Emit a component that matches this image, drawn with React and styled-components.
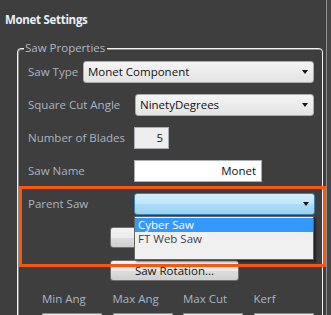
import React from 'react';
import styled, { createGlobalStyle } from 'styled-components';

const GlobalStyle = createGlobalStyle`
  html, body {
    margin: 0;
    padding: 0;
    background: #464646;
    overflow: hidden;
  }
`;

export default function App() {
  return (
    <>
      <GlobalStyle />
      <Page>
        <Title>Monet Settings</Title>
        <Group>
          <Legend>Saw Properties</Legend>
          <Row>
            <Label width={55}>Saw Type</Label>
            <Combo>
              <span>Monet Component</span>
              <Arrow />
            </Combo>
          </Row>
          <Row>
            <Label width={107}>Square Cut Angle</Label>
            <Combo>
              <span>NinetyDegrees</span>
              <Arrow />
            </Combo>
          </Row>
          <Row>
            <Label width={106}>Number of Blades</Label>
            <Field width={35} muted>5</Field>
          </Row>
          <Row>
            <Label width={106}>Saw Name</Label>
            <Field width={128}>Monet</Field>
          </Row>
          <Row>
            <Label width={106}>Parent Saw</Label>
            <ComboWrap>
              <Combo active>
                <span />
                <Arrow />
              </Combo>
              <Popup>
                <Item selected>Cyber Saw</Item>
                <Item>FT Web Saw</Item>
              </Popup>
            </ComboWrap>
          </Row>
          <Button top={12}>&nbsp;</Button>
          <Button top={12}>Saw Rotation...</Button>
          <Columns>
            <ColLabel>Min Ang</ColLabel>
            <ColLabel>Max Ang</ColLabel>
            <ColLabel>Max Cut</ColLabel>
            <ColLabel>Kerf</ColLabel>
            <ColBox />
            <ColBox />
            <ColBox />
            <ColBox />
          </Columns>
        </Group>
        <Highlight />
      </Page>
    </>
  );
}

const font = `"Open Sans", "Noto Sans", sans-serif`;

const Page = styled.div`
  position: relative;
  width: 327px;
  height: 315px;
  box-sizing: border-box;
  padding-left: 5px;
  background: #3e3e3e;
  border-right: 1px solid #8e8e8e;
  overflow: hidden;
  font-family: ${font};
`;

const Title = styled.div`
  margin-top: 12px;
  font-size: 11.5px;
  line-height: 15px;
  font-weight: 700;
  letter-spacing: -0.3px;
  color: #e9eff6;
`;

const Group = styled.fieldset`
  margin: 14px 0 0 12px;
  width: 306px;
  box-sizing: border-box;
  padding: 6px 8px 0 10px;
  border: 1px solid #f2f2f2;
  border-radius: 4px;
  box-shadow: inset 1px 1px 0 #8a8a8a;
  display: flex;
  flex-direction: column;
  min-width: 0;
`;

const Legend = styled.legend`
  margin-left: -4px;
  padding: 0 2px 0 1px;
  font-size: 11.5px;
  line-height: 14px;
  color: #aeb8c6;
  background: #3e3e3e;
`;

const Row = styled.div`
  display: flex;
  align-items: center;
  height: 22px;
  & + & {
    margin-top: 11px;
  }
`;

const Label = styled.div`
  flex: 0 0 ${(p) => p.width}px;
  font-size: 11.5px;
  line-height: 14px;
  color: #aab4c2;
  white-space: nowrap;
`;

const Combo = styled.div`
  flex: 1;
  height: 22px;
  box-sizing: border-box;
  display: flex;
  align-items: center;
  justify-content: space-between;
  padding: 0 5px 0 4px;
  border: 1px solid ${(p) => (p.active ? '#3c7fb1' : '#acacac')};
  border-radius: 3px;
  background: ${(p) =>
    p.active
      ? 'linear-gradient(#d3eefc 0%, #c4e6f8 48%, #acdcf5 52%, #98d2f1 100%)'
      : 'linear-gradient(#f5f5f5 0%, #ececec 50%, #e3e3e3 100%)'};
  font-size: 11.5px;
  line-height: 14px;
  color: #111;
  white-space: nowrap;
`;

const ComboWrap = styled.div`
  position: relative;
  flex: 1;
  display: flex;
  margin-right: -1px;
`;

const Arrow = styled.i`
  width: 0;
  height: 0;
  border-left: 3.5px solid transparent;
  border-right: 3.5px solid transparent;
  border-top: 4px solid #151515;
`;

const Field = styled.div`
  width: ${(p) => p.width}px;
  height: 22px;
  box-sizing: border-box;
  padding-right: 5px;
  border: 1px solid #abadb3;
  background: ${(p) => (p.muted ? '#eeeeee' : '#ffffff')};
  font-size: 11.5px;
  line-height: 20px;
  text-align: right;
  color: #111;
`;

const Popup = styled.div`
  position: absolute;
  left: 0;
  top: 23px;
  width: 180px;
  height: 44px;
  box-sizing: border-box;
  padding-top: 1px;
  border: 1px solid #646464;
  background: #f0f0f0;
  box-shadow: 2px 2px 2px rgba(0, 0, 0, 0.45);
  z-index: 2;
`;

const Item = styled.div`
  height: 14px;
  padding-left: 3px;
  font-size: 11.5px;
  line-height: 14px;
  color: ${(p) => (p.selected ? '#ffffff' : '#444')};
  background: ${(p) => (p.selected ? '#3399ff' : 'transparent')};
`;

const Button = styled.div`
  width: 129px;
  height: 21px;
  box-sizing: border-box;
  margin: ${(p) => p.top}px 0 0 82px;
  border: 1px solid #707070;
  border-radius: 3px;
  background: linear-gradient(#f3f3f3 0%, #ebebeb 50%, #dddddd 52%, #cfcfcf 100%);
  font-size: 11.5px;
  line-height: 19px;
  text-align: center;
  color: #111;
`;

const Columns = styled.div`
  display: grid;
  grid-template-columns: repeat(4, 60px);
  column-gap: 10.5px;
  row-gap: 7px;
  margin: 11px 0 0 14px;
`;

const ColLabel = styled.div`
  font-size: 11.5px;
  line-height: 14px;
  color: #a6b6c8;
`;

const ColBox = styled.div`
  height: 20px;
  border: 1px solid #8c8c8c;
  background: #e8e8e8;
`;

const Highlight = styled.div`
  position: absolute;
  left: 19px;
  top: 186px;
  width: 307px;
  height: 81px;
  box-sizing: border-box;
  border: 3px solid #fb560e;
  pointer-events: none;
  z-index: 3;
`;
